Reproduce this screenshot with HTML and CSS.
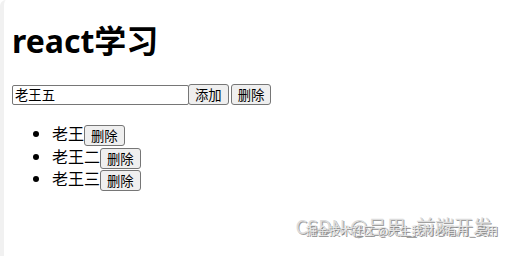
FILE: index.html
```html
<!DOCTYPE html>
<html lang="zh">
<head>
    <meta charset="UTF-8">
    <title>react学习</title>
    <link rel="stylesheet" href="styles.css">
</head>
<body>
    <div class="page">
        <h1 class="title">react学习</h1>
        <div class="toolbar">
            <input class="name-input" type="text" value="老王五">
            <button class="btn">添加</button>
            <button class="btn">删除</button>
        </div>
        <ul class="name-list">
            <li>老王<button class="btn">删除</button></li>
            <li>老王二<button class="btn">删除</button></li>
            <li>老王三<button class="btn">删除</button></li>
        </ul>
    </div>

    <!-- filigranes -->
    <div class="watermark">
        <span class="wm-big">CSDN @吕用_前端开发</span>
        <span class="wm-small">掘金技术社区 @天生我材必有用_吴用</span>
    </div>
</body>
</html>
```

FILE: styles.css
```css
* {
    box-sizing: border-box;
}

html, body {
    margin: 0;
    height: 100%;
    background: white;
    overflow: hidden;
}

body {
    font-family: "Noto Sans", "Noto Sans CJK SC", sans-serif;
    color: black;
}

.page {
    height: 100%;
    border-left: 4px solid #f1f1f1;
    border-top-left-radius: 6px;
    padding: 1px 8px 0 8px;
}

.title {
    font-size: 32px;
    font-weight: bold;
    line-height: 37px;
    margin: 21px 0 25px 0;
}

.toolbar {
    display: flex;
    align-items: center;
    height: 21px;
}

.name-input {
    width: 177px;
    height: 20px;
    font-family: "Noto Sans CJK SC", sans-serif;
    font-size: 13.33px;
    padding: 0 2px;
    border: 1px solid #767676;
    border-radius: 2px;
    margin: 0;
}

.btn {
    font-family: "Noto Sans CJK SC", sans-serif;
    font-size: 13.33px;
    line-height: 17px;
    height: 21px;
    padding: 1px 6px;
    margin: 0 0 0 2px;
    border: 1px solid #767676;
    border-radius: 3px;
    background: #efefef;
    color: black;
}

.toolbar .btn:first-of-type {
    margin-left: -1px;
}

.name-list {
    margin: 17px 0 0 0;
    padding-left: 40px;
    font-size: 16px;
    font-family: "Noto Sans CJK SC", sans-serif;
}

.name-list li {
    line-height: 22px;
    height: 22.5px;
}

.name-list .btn {
    margin-left: 0;
    vertical-align: middle;
}

.watermark {
    position: absolute;
    right: 8px;
    bottom: 10px;
    width: 230px;
    height: 28px;
    font-family: "Noto Sans CJK SC", sans-serif;
    pointer-events: none;
}

.wm-big {
    position: absolute;
    right: 8px;
    top: -6px;
    font-size: 19px;
    color: #dcdcdc;
    white-space: nowrap;
    text-shadow: 1px 1px 0 #a0a0a0;
}

.wm-small {
    position: absolute;
    right: 2px;
    top: 4px;
    font-size: 11.5px;
    color: #e6e6e6;
    white-space: nowrap;
    text-shadow: 1px 1px 0 #8a8a8a;
}
```
